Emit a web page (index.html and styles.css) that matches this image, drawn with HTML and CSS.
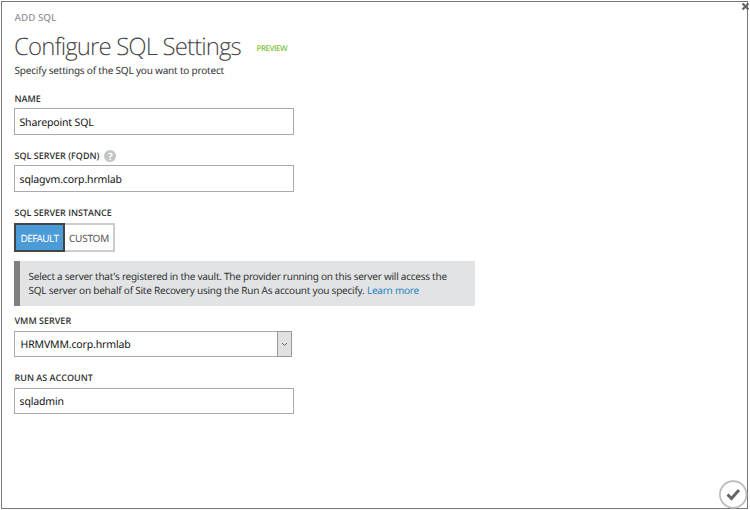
FILE: index.html
```html
<!DOCTYPE html>
<html lang="en">
<head>
<meta charset="utf-8">
<title>Configure SQL Settings</title>
<link rel="stylesheet" href="styles.css">
</head>
<body>
<main class="dialog">
  <button class="close" aria-label="Close"><svg width="9" height="9" viewBox="0 0 9 9"><path d="M1.5 1.5 7.5 7.5M7.5 1.5 1.5 7.5"/></svg></button>
  <div class="crumb">ADD SQL</div>
  <header class="heading"><h1>Configure SQL Settings</h1><span class="preview">PREVIEW</span></header>
  <p class="subtitle">Specify settings of the SQL you want to protect</p>
  <form>
    <section class="field"><label>NAME</label><div class="input"><span>Sharepoint SQL</span></div></section>
    <section class="field"><label>SQL SERVER (FQDN)</label><span class="help">?</span><div class="input"><span>sqlagvm.corp.hrmlab</span></div></section>
    <section class="field instance"><label>SQL SERVER INSTANCE</label>
      <div class="toggle"><div class="option selected">DEFAULT</div><div class="option">CUSTOM</div></div>
    </section>
    <aside class="info"><div>Select a server that's registered in the vault. The provider running on this server will access the</div><div class="last">SQL server on behalf of Site Recovery using the Run As account you specify. <a>Learn more</a></div></aside>
    <section class="field"><label>VMM SERVER</label><div class="input select"><span>HRMVMM.corp.hrmlab</span><div class="arrow"><svg width="7" height="5" viewBox="0 0 7 5"><path d="M1 1 3.5 3.5 6 1"/></svg></div></div></section>
    <section class="field"><label>RUN AS ACCOUNT</label><div class="input"><span>sqladmin</span></div></section>
  </form>
  <button class="confirm" aria-label="Complete"><svg width="29" height="29" viewBox="0 0 29 29"><circle cx="14.2" cy="14.5" r="13.3"/><path d="M8.5 14.5 12.5 18.5 20 10"/></svg></button>
</main>
</body>
</html>
```
FILE: styles.css
```css
* { box-sizing: border-box; }
body { margin: 0; background: #fff; font: 11px/14px "Noto Sans", "Open Sans", sans-serif; color: #333; text-rendering: geometricPrecision; }
button { padding: 0; border: 0; background: none; }
svg { display: block; fill: none; }
.dialog { position: relative; width: 747px; height: 508px; margin: 1px; padding: 9px 0 0 12px; border: 1px solid #777; white-space: nowrap; }
.close { position: absolute; right: -3px; top: 0; }
.close path { stroke: #666; stroke-width: 2.2; }
.crumb { height: 15px; padding-left: .5px; font: 600 9.8px/14px "Open Sans", sans-serif; color: #999; }
.heading { display: flex; height: 37px; align-items: center; }
h1 { width: 242.5px; margin: 0; padding-top: 4px; font: 300 24px/37px "Open Sans", sans-serif; letter-spacing: -0.9px; color: #444; }
.preview { padding-top: 8px; font: 600 8px/14px "Open Sans", sans-serif; letter-spacing: -0.5px; color: #7fc241; }
.subtitle { height: 29px; margin: 0; padding-left: .5px; font-size: 10px; line-height: 14px; letter-spacing: -0.2px; }
.field { display: grid; grid-template-columns: max-content 1fr; grid-template-rows: 16px 27px; width: 280px; height: 57px; column-gap: 5px; }
label { padding-left: .5px; font: 600 9px/14px "Open Sans", sans-serif; }
.help { width: 12px; height: 12px; margin-top: 1px; border-radius: 50%; background: #c4c4c4; color: #fff; font: bold 10px/12px "Open Sans", sans-serif; text-align: center; }
.input { grid-column: 1 / 3; display: flex; height: 27px; padding-left: 4.5px; align-items: center; border: 1px solid #aaa; color: #111; font-size: 10.5px; letter-spacing: -0.15px; }
.input > span { padding-top: 2px; }
.instance { height: 55px; grid-template-rows: 17px 30px; }
.toggle { grid-column: 1 / 3; display: flex; height: 30px; }
.option { width: 50px; height: 29px; border: 2px solid #ccc; border-left: 0; font-size: 10px; line-height: 26px; letter-spacing: -0.2px; text-align: center; color: #555; }
.selected { width: 51px; border: 2px solid #444; background: #4c9bd9; color: #fff; letter-spacing: -0.6px; }
.info { width: 461px; height: 45px; margin-bottom: 8px; padding: 8px 0 0 8.5px; border-left: 6px solid #808080; background: #e1e3e5; font-size: 10px; letter-spacing: -0.25px; }
.last { letter-spacing: -0.23px; }
.info a { color: #1f83c0; }
.select { width: 278px; height: 26px; margin-top: 1px; padding-left: 5.5px; }
.arrow { display: grid; width: 15px; height: 26px; margin: -1px -1px -1px auto; place-items: center; border: 1px solid #999; background: #e1e1e1; }
.arrow path { stroke: #666; }
.field:last-child .input { margin-top: 1px; height: 26px; }
.confirm { position: absolute; right: -1px; bottom: -1px; }
.confirm circle { stroke: #bbb; stroke-width: 1.7; }
.confirm path { stroke: #666; stroke-width: 3; }
```
